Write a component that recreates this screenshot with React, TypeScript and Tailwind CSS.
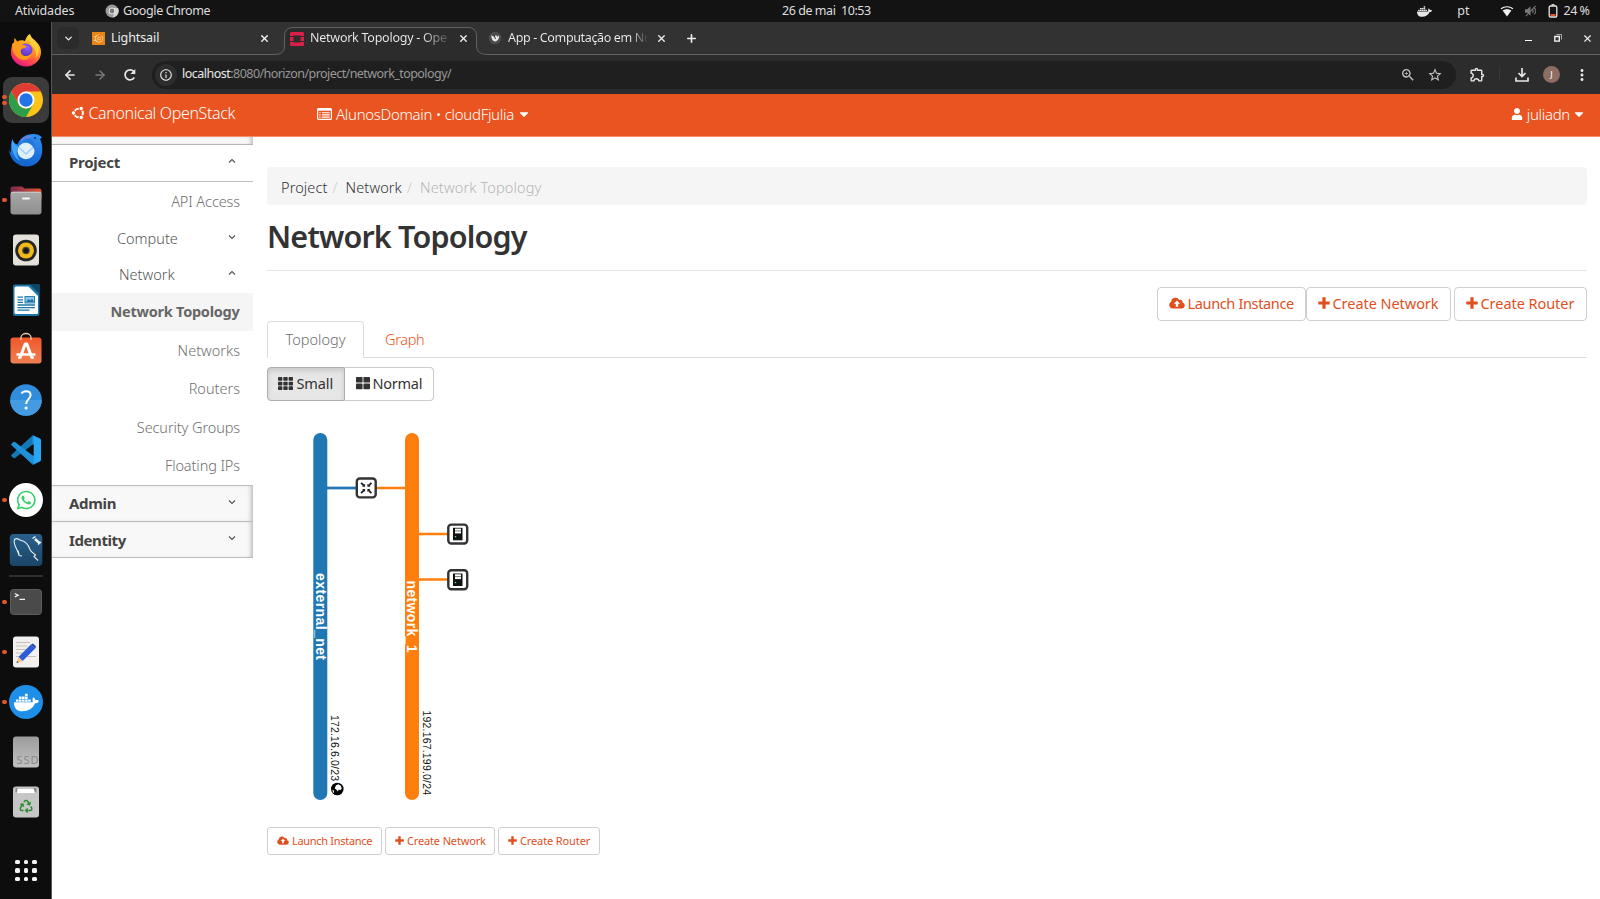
import type { ReactNode } from "react";
import { FaCaretDown, FaDocker, FaRecycle, FaTh, FaThLarge, FaUser, FaWhatsapp } from "react-icons/fa";
import { MdMoreVert, MdOutlineExtension, MdOutlineInfo, MdStarBorder, MdZoomIn } from "react-icons/md";
import { ArrowLeft, ArrowRight, ChevronDown, Plus, X } from "lucide-react";

/* ---------- Dock icons, each drawn on a 36×36 grid ---------- */

const Firefox = () => (
  <>
    <defs>
      <linearGradient id="ff" x1="0.8" y1="0" x2="0.3" y2="1">
        <stop offset="0" stopColor="#fff04f" />
        <stop offset="0.4" stopColor="#ffa01f" />
        <stop offset="0.75" stopColor="#ff4650" />
        <stop offset="1" stopColor="#e5178a" />
      </linearGradient>
      <radialGradient id="fg" cx="0.6" cy="0.3" r="0.8">
        <stop offset="0" stopColor="#9a5cff" />
        <stop offset="1" stopColor="#4a2fb0" />
      </radialGradient>
    </defs>
    <path fill="url(#ff)" d="M22 2c1 4 4 5 6.500 8 3 3 4.500 6 4.500 10a15 14.500 0 0 1-30 0c0-4 1-7 3-10l.5-4c1 1 2 2 2.500 3.500C12 8 15 8 17 9c1-3 2.500-6 5-7z" />
    <circle cx="18" cy="18" r="6.500" fill="url(#fg)" />
    <path fill="#ff9a1c" d="M4 12c4-2 8-2 10 1 2 0 4 .5 4.500 1.500-1 2-4 1.500-5.500 3-1 3 1 6 4 6.500 3 .3 6-1 7-3.500-.5 4.500-4 7.500-8 7.500C8 27.500 4 20 4 12z" />
    <path fill="#ffd53a" opacity=".8" d="M22 3c.5 4 7 7 8.500 13 .8 4-.5 8-3 10 2-6-1-10-4-13-2-3-3-6-1.500-10z" />
  </>
);

const Chrome = () => (
  <>
    <circle cx="18" cy="18" r="17" fill="#fcc419" />
    <path fill="#e03c31" d="M3.300 9.500A17 17 0 0 1 32.700 9.500H18a8.500 8.500 0 0 0-7.400 4.300z" />
    <path fill="#e03c31" d="M3.300 9.500 10.600 22.200 18 9.500z" />
    <path fill="#2e9e4b" d="M3.300 9.500A17 17 0 0 0 18 35l7.400-12.800a8.500 8.500 0 0 1-14.800 0z" />
    <circle cx="18" cy="18" r="8.500" fill="#fff" />
    <circle cx="18" cy="18" r="6.700" fill="#2373e8" />
  </>
);

const Thunderbird = () => (
  <>
    <defs>
      <linearGradient id="tb" x1="0.6" y1="0" x2="0.3" y2="1">
        <stop offset="0" stopColor="#2f8df0" />
        <stop offset="1" stopColor="#1060c8" />
      </linearGradient>
    </defs>
    <path fill="url(#tb)" d="M4.500 7c.5 3 2 5 5 5.500C12 6 18 2 25 2c4 0 7 1 9 3.500l-2 1.500c2.500 5 2.500 10 2 14-1 8-7 13.500-15 13.500C9 34.500 1 27 1 16c0 2 1 3.500 2 4.500C2.500 15 3 10 4.500 7z" />
    <path fill="#3fa6f7" d="M4.500 7c.5 4 4 7 6 8-3 4-2 10 2 14C7 27 2 19 4.500 7z" />
    <ellipse cx="18" cy="19" rx="8.500" ry="8.200" fill="#dff0fd" />
    <path d="M11 15.500l7 6.500 7-6.500" stroke="#a9cbee" strokeWidth="1.500" fill="none" />
    <path fill="#2378dc" d="M15 9c4-3 8-3 11 1 1.500 2 1.500 5 0 7-1-4-6-7-11-8z" />
    <path d="M13 8.500c3-3 7-4 10-3.500" stroke="#8d7be0" strokeWidth="1.200" fill="none" />
    <circle cx="27" cy="6" r="1.100" fill="#0d3a80" />
  </>
);

const Files = () => (
  <>
    <defs>
      <linearGradient id="fo" x1="0" y1="0" x2="1" y2="0">
        <stop offset="0" stopColor="#7b2a52" />
        <stop offset="1" stopColor="#e8552b" />
      </linearGradient>
      <linearGradient id="fb" x1="0" y1="0" x2="0" y2="1">
        <stop offset="0" stopColor="#a8a8a8" />
        <stop offset="1" stopColor="#8f8f8f" />
      </linearGradient>
    </defs>
    <path fill="url(#fo)" d="M2.500 6.500a2 2 0 0 1 2-2H14l2.500 2H31a2.500 2.500 0 0 1 2.500 2.500v8h-31z" />
    <rect x="2.500" y="9.500" width="31" height="23" rx="3" fill="url(#fb)" />
    <path d="M3 10.500h30" stroke="#c4c4c4" />
    <rect x="14" y="15.500" width="8" height="2" rx="1" fill="#f5f5f5" />
  </>
);

const Rhythmbox = () => (
  <>
    <rect x="5" y="2.500" width="26" height="31" rx="3" fill="#e4e0da" />
    <circle cx="18" cy="18.500" r="10.800" fill="#262626" />
    <circle cx="18" cy="18.500" r="8" fill="#f1b917" />
    <circle cx="18" cy="18.500" r="3.800" fill="#4a4a42" />
    <circle cx="18" cy="18.500" r="2.600" fill="#151515" />
  </>
);

const Writer = () => (
  <>
    <path fill="#1c75a8" d="M7 2.500h24.500v29a2.500 2.500 0 0 1-2.500 2.500H7a2 2 0 0 1-2-2V4.500a2 2 0 0 1 2-2z" />
    <path fill="#fff" d="M8 4.500h12.500L30 14v16.500a1.500 1.500 0 0 1-1.500 1.500H8A1.500 1.500 0 0 1 6.500 30.500V6A1.500 1.500 0 0 1 8 4.500z" />
    <path fill="#0b4767" d="M22 2.500h9.500V12z" />
    <path d="M9.500 15.200h5.500M9.500 17.800h5.500M9.500 20.400h5.500M9.500 23h17.500M9.500 25.600h17.500M9.500 28.200h12" stroke="#1c75a8" strokeWidth="1.300" />
    <rect x="17" y="14.500" width="9.500" height="6.500" fill="#8fc7e8" stroke="#1c75a8" strokeWidth=".9" />
    <path fill="#1c75a8" d="M18 20l2.500-3 2 1.500 1.500-2L26 20z" />
  </>
);

const Software = () => (
  <>
    <defs>
      <linearGradient id="sw" x1="0" y1="0" x2="0" y2="1">
        <stop offset="0" stopColor="#f0582a" />
        <stop offset="1" stopColor="#f08052" />
      </linearGradient>
    </defs>
    <rect x="2.500" y="5.500" width="31" height="26" rx="3" fill="url(#sw)" />
    <path d="M13 8V5.500a5 4 0 0 1 10 0V8" stroke="#e9c9ae" strokeWidth="1.300" fill="none" />
    <path d="M12 26 17.200 12h1.600L24 26" stroke="#fff" strokeWidth="3" fill="none" strokeLinejoin="round" />
    <path d="M8.500 22.500h19" stroke="#fff" strokeWidth="2.500" />
    <circle cx="11.500" cy="25.500" r="1.500" fill="#fff" />
    <circle cx="24.500" cy="25.500" r="1.500" fill="#fff" />
  </>
);

const Help = () => (
  <>
    <circle cx="18" cy="18" r="15.800" fill="#2f8ddc" />
    <path d="M2.200 18a15.800 15.800 0 0 0 31.600 0z" fill="#459be2" />
    <path d="M13.500 11.500c1-1.700 2.500-2.300 4.500-2.300 2.700 0 4.600 1.500 4.600 3.900 0 3.900-4.500 4.300-4.500 9" stroke="#fff" strokeWidth="2" fill="none" />
    <circle cx="18.100" cy="26" r="1.600" fill="#fff" />
  </>
);

const VsCode = () => (
  <>
    <path fill="#1378b8" d="M24.500 3.500 3.500 22.800a1 1 0 0 0 0 1.400l2 1.800a1.200 1.200 0 0 0 1.500 0L26 11.500z" />
    <path fill="#1f8fd6" d="M24.500 32.500 3.500 13.300a1 1 0 0 1 0-1.500L5.500 10A1.200 1.200 0 0 1 7 10l19 14.500z" />
    <path fill="#2ba6f2" d="M24.500 3.500 26 3.700 32 6.600a1.800 1.800 0 0 1 1 1.600v19.600a1.800 1.800 0 0 1-1 1.600l-6 2.900-1.500.2a1.500 1.500 0 0 0 1.200-1.500V5a1.500 1.500 0 0 0-1.200-1.500z" />
    <path fill="#2196e4" d="M24.500 3.500h1.500V12l-1.500 1zM24.500 32.500H26V24l-1.500-1z" />
  </>
);

const WhatsApp = () => (
  <>
    <circle cx="18" cy="18" r="17" fill="#fff" />
    <FaWhatsapp x="7.500" y="7.300" size={21.500} color="#36cf68" />
  </>
);

const Workbench = () => (
  <>
    <defs>
      <linearGradient id="wb" x1="0" y1="0" x2="0" y2="1">
        <stop offset="0" stopColor="#29618c" />
        <stop offset="1" stopColor="#1b4568" />
      </linearGradient>
    </defs>
    <rect x="1.800" y="2" width="32.500" height="32" rx="4" fill="url(#wb)" />
    <path d="M11 23.500c-.5-2-1-3.500-2-5.500-2-4-3.500-8-2.500-10.500 1.500-1.500 4-.8 6 .7 4.500.8 8 4.800 9.500 9.300 1 2.500 4 4 5.500 5.500l-1.500 1.500 4 4M11 23.500l3 .5M9 18c1.500 1 2 3 2 5.500" stroke="#e4edf4" strokeWidth="1.100" fill="none" />
    <path d="M27 7l4.500 4" stroke="#f2f6f9" strokeWidth="2.400" />
    <path d="M24.500 6.500l3-2M30 12.500l3-2.500" stroke="#f2f6f9" strokeWidth="1.500" />
  </>
);

const Terminal = () => (
  <>
    <rect x="2.500" y="5.500" width="31" height="25" rx="3" fill="#4a4a4a" stroke="#5d5d5d" />
    <path d="M6.800 9.500l3.400 1.700-3.400 1.700M11.500 15.300h5.500" stroke="#f2f2f2" strokeWidth="1.200" fill="none" />
  </>
);

const Editor = () => (
  <>
    <rect x="5" y="2.500" width="26" height="31" rx="3" fill="#f1f0ee" />
    <path d="M8 8.500h14M8 12h11M8 15.500h12M8 19h8M8 22.500h20" stroke="#c8c2b4" strokeWidth="1.100" />
    <path d="M12.500 25 25 12.500" stroke="#2e5bd8" strokeWidth="6" />
    <path d="M23 10.500l2-1 3 3-.8 2z" fill="#1f43a8" />
    <path fill="#f6c08c" d="M10.300 22.700l4.500 4.500L8.500 29z" />
    <path fill="#444" d="M8.500 29l.6-2 1.500 1.400z" />
  </>
);

const Docker = () => (
  <>
    <circle cx="18" cy="18" r="17" fill="#1d8fe8" />
    <FaDocker x="6" y="6" size={25} color="#fff" />
  </>
);

const Ssd = () => (
  <>
    <defs>
      <linearGradient id="sd" x1="0" y1="0" x2="0" y2="1">
        <stop offset="0" stopColor="#9c9c9c" />
        <stop offset="1" stopColor="#c2c2c2" />
      </linearGradient>
    </defs>
    <rect x="5" y="2.500" width="26" height="31" rx="3" fill="url(#sd)" />
    <text x="8.500" y="29.500" fontSize="11" fill="#8a8a8a" fontFamily="Noto Sans" textLength="22">SSD</text>
  </>
);

const Trash = () => (
  <>
    <rect x="5" y="2.500" width="26" height="31" rx="3" fill="#c6c6c6" />
    <path fill="#8c8c8c" d="M7.500 4h21v4.500h-21z" />
    <path fill="#fff" d="M9.500 4.500h16l1.500 4.500H9z" />
    <FaRecycle x="11.300" y="15.500" size={13.500} color="#2f8f35" />
  </>
);

type DockItem = { icon: () => ReactNode; running?: number; active?: boolean };

const pinned: DockItem[] = [
  { icon: Firefox },
  { icon: Chrome, running: 2, active: true },
  { icon: Thunderbird },
  { icon: Files, running: 1 },
  { icon: Rhythmbox },
  { icon: Writer },
  { icon: Software },
  { icon: Help },
  { icon: VsCode },
  { icon: WhatsApp, running: 1 },
  { icon: Workbench },
];
const others: DockItem[] = [
  { icon: Terminal, running: 1 },
  { icon: Editor, running: 1 },
  { icon: Docker, running: 1 },
  { icon: Ssd },
  { icon: Trash },
];

function DockButton({ icon: Icon, running = 0, active }: DockItem) {
  return (
    <div className="flex h-[50px] w-full shrink-0 items-center">
      <div className={`ml-[3px] flex h-[46px] w-[46px] items-center rounded-[9px] ${active ? "bg-[#3b3b3b]" : ""}`}>
        <div className="flex w-[5px] flex-col items-center gap-[2px]">
          {Array.from({ length: running }, (_, i) => (
            <i key={i} className="-ml-[2px] h-[4.400px] w-[4.400px] rounded-full bg-[#e2572b]" />
          ))}
        </div>
        <svg viewBox="0 0 36 36" className="h-9 w-9">
          <Icon />
        </svg>
      </div>
    </div>
  );
}

function Dock() {
  return (
    <nav className="flex w-[52px] shrink-0 flex-col border-r border-[#555] bg-[#0d0d0d] pt-[3px]">
      {pinned.map((d, i) => (
        <DockButton key={i} {...d} />
      ))}
      <div className="ml-[9px] h-[2px] w-[34px] shrink-0 bg-[#2e2e2e]" />
      {others.map((d, i) => (
        <DockButton key={i} {...d} />
      ))}
      <div className="mt-[32.500px] ml-[15px] grid w-[22px] grid-cols-3 gap-[4px]">
        {Array.from({ length: 9 }, (_, i) => (
          <i key={i} className="h-[4.600px] w-[4.600px] rounded-[1.500px] bg-[#f4f4f4]" />
        ))}
      </div>
    </nav>
  );
}

/* ---------- Desktop top bar ---------- */

function TopBar() {
  return (
    <header className="flex h-[22px] shrink-0 items-center bg-[#131313] text-[12.500px] leading-none whitespace-pre text-[#dedede]">
      <div className="flex w-[782px] items-center pl-[15px]">
        <span className="w-[90px] tracking-[-0.15px]">Atividades</span>
        <svg viewBox="0 0 14 14" className="mr-[4px] h-[14px] w-[14px]">
          <circle cx="7" cy="7" r="6.500" fill="#9b9b9b" />
          <path fill="#d4d4d4" d="M7 4h6a6.500 6.500 0 0 1-5.500 9.500L9.800 8.500z" />
          <circle cx="7" cy="7" r="3.300" fill="#eee" />
          <circle cx="7" cy="7" r="2.400" fill="#777" />
        </svg>
        <span className="tracking-[-0.4px]">Google Chrome</span>
      </div>
      <span className="tracking-[-0.45px]">26 de mai  10:53</span>
      <div className="flex flex-1 items-center justify-end pr-[10.500px]">
        <FaDocker className="mr-[25px] h-[15px] w-[15px] text-[#e6e6e6]" />
        <span className="mr-[30px]">pt</span>
        <svg viewBox="0 0 14 12" className="mr-[10px] h-[12px] w-[14px]">
          <path fill="#f2f2f2" d="M7 11.500 2.600 5.500a7.500 7.500 0 0 1 8.800 0z" />
          <path d="M1 3.800a10 10 0 0 1 12 0" stroke="#f2f2f2" strokeWidth="1.300" fill="none" />
        </svg>
        <svg viewBox="0 0 14 12" className="mr-[11px] h-[12px] w-[13px]">
          <path fill="#777" d="M1 4h2.500L7 1v10L3.500 8H1z" />
          <path d="M9 4c1 1.200 1 3 0 4M11 2.500c2 2 2 5 0 7M2 11.500 12.500.5" stroke="#777" strokeWidth="1.200" fill="none" />
        </svg>
        <svg viewBox="0 0 10 14" className="mr-[6px] h-[14px] w-[10px]">
          <rect x="1.200" y="2" width="7.600" height="11" rx="1.200" fill="none" stroke="#e8e8e8" strokeWidth="1.300" />
          <path d="M3.500.8h3" stroke="#e8e8e8" strokeWidth="1.400" />
          <path d="M2.500 11h5" stroke="#e2572b" strokeWidth="2" />
        </svg>
        <span className="tracking-[-0.5px]">24 %</span>
      </div>
    </header>
  );
}

/* ---------- Browser chrome ---------- */

function TabStrip() {
  return (
    <div className="flex h-[33px] shrink-0 bg-[#323232] text-[12.500px] leading-none whitespace-nowrap text-[#ededed]">
      <div className="flex w-[223px] items-center border-b border-[#616161] pl-[5px]">
        <div className="flex h-[22px] w-[22px] items-center justify-center rounded-[7px] bg-[#2b2b2b]">
          <ChevronDown size={11} strokeWidth={3} />
        </div>
        <svg viewBox="0 0 13 13" className="ml-[13px] h-[13px] w-[13px]">
          <rect width="13" height="13" fill="#ea8414" />
          <circle cx="7" cy="6.500" r="3.800" fill="none" stroke="#fbdcb2" strokeWidth=".8" strokeDasharray="17 3" />
          <circle cx="7" cy="6.500" r="1.500" fill="none" stroke="#fbdcb2" strokeWidth=".8" />
          <path d="M1.500 4.500h3M1.500 8.500h3" stroke="#fbdcb2" strokeWidth=".7" />
        </svg>
        <span className="ml-[6px] w-[148px] tracking-[-0.1px]">Lightsail</span>
        <X size={11} strokeWidth={3} />
      </div>
      <div className="relative flex w-[212px] items-center pl-[15px]">
        <svg viewBox="0 0 212 33" className="absolute inset-0 h-[33px] w-[212px]">
          <path
            d="M0 32.500Q9.500 32.500 9.500 24V14Q9.500 5.500 18 5.500H193Q201.500 5.500 201.500 14V24Q201.500 32.500 212 32.500V34H0z"
            fill="#2c2c2c"
            stroke="#616161"
          />
        </svg>
        <svg viewBox="0 0 14 14" className="relative h-[14px] w-[14px]">
          <path fill="#dc1f49" fillRule="evenodd" d="M1.500 0h11A1.500 1.500 0 0 1 14 1.500V4h-3.500V3.500h-7V4H0V1.500A1.500 1.500 0 0 1 1.500 0zM0 5h3.500v4H0zM10.500 5H14v4h-3.500zM0 10h3.500v.5h7V10H14v2.500a1.500 1.500 0 0 1-1.500 1.500h-11A1.500 1.500 0 0 1 0 12.500z" />
        </svg>
        <span className="relative ml-[6px] w-[140px] bg-linear-to-r from-[#ededed] from-80% to-[#444] bg-clip-text py-1 tracking-[-0.25px] text-transparent">
          Network Topology - Ope
        </span>
        <X size={11} strokeWidth={3} className="relative ml-[8px]" />
      </div>
      <div className="flex flex-1 items-center border-b border-[#616161] pr-[7px] pl-px">
        <svg viewBox="0 0 14 14" className="h-[14px] w-[14px]">
          <circle cx="7" cy="7" r="6.300" fill="#4c4c4c" />
          <path fill="#e8e8e8" d="M3.500 4c1 1.500 2 1.500 3 1.500L8 4l1 1.500c1 0 1.500-.5 2-1.500.5 3-1 6-4 6.500C4.500 10 3 7 3.500 4z" />
          <path d="M6 4l1.500 4" stroke="#333" />
        </svg>
        <span className="ml-[6px] bg-linear-to-r from-[#ededed] from-86% to-[#323232] to-98% bg-clip-text py-1 tracking-[-0.35px] text-transparent">
          App - Computação em Nu
        </span>
        <X size={11} strokeWidth={3} className="ml-[5px]" />
        <Plus size={13} strokeWidth={3} className="ml-[18px]" />
        <div className="ml-auto flex items-center">
          <i className="mt-[4px] h-px w-[7px] bg-white" />
          <svg viewBox="0 0 8 8" className="ml-[22px] h-[8px] w-[8px]">
            <path d="M.8 2.500h4.500v4.700H.8z" fill="none" stroke="#fff" strokeWidth="1.300" />
            <path d="M2.500.5h5v5" fill="none" stroke="#aaa" />
          </svg>
          <X size={11} strokeWidth={2.500} className="ml-[20px]" />
        </div>
      </div>
    </div>
  );
}

function Toolbar() {
  return (
    <div className="flex h-[39px] shrink-0 items-center bg-[#2c2c2c] pr-[11px] pl-[11px] text-[#e6e6e6]">
      <ArrowLeft size={14} strokeWidth={2.800} />
      <ArrowRight size={14} strokeWidth={2.500} className="ml-[16px] text-[#777]" />
      <svg viewBox="0 0 14 14" className="ml-[16px] h-[14px] w-[14px]">
        <path d="M11.300 9.500a5 5 0 1 1-.5-6" fill="none" stroke="#e6e6e6" strokeWidth="1.700" />
        <path fill="#e6e6e6" d="M12.300 1v5H7.300z" />
      </svg>
      <div className="ml-[15px] flex h-[28px] flex-1 items-center rounded-full bg-[#1f1f1f] pr-[13px] pl-[3px]">
        <div className="flex h-[22px] w-[22px] items-center justify-center rounded-full bg-[#2d2d2d]">
          <MdOutlineInfo size={14} />
        </div>
        <p className="ml-[5px] flex-1 text-[12.500px] leading-none whitespace-nowrap text-[#989898]">
          <span className="tracking-[-0.5px] text-[#e8e8e8]">localhost</span>
          <span className="tracking-[-0.56px]">:8080/horizon/project/network_topology/</span>
        </p>
        <MdZoomIn size={16} className="text-[#c4c4c4]" />
        <MdStarBorder size={16} className="ml-[11px] text-[#c4c4c4]" />
      </div>
      <MdOutlineExtension size={17} className="ml-[13px]" />
      <i className="ml-[13px] h-[13px] w-px bg-[#383838]" />
      <svg viewBox="0 0 14 14" className="ml-[15px] h-[14px] w-[14px]">
        <path d="M7 0v8M3.500 5 7 8.500 10.500 5M1 9.500V13h12V9.500" fill="none" stroke="#e6e6e6" strokeWidth="1.700" />
      </svg>
      <div className="ml-[14px] flex h-[17px] w-[17px] items-center justify-center rounded-full bg-[#8d6e63] text-[9px] leading-none text-white">
        J
      </div>
      <MdMoreVert size={18} className="ml-[13px] -mr-[2px]" />
    </div>
  );
}

/* ---------- Horizon dashboard ---------- */

function UbuntuMark() {
  return (
    <svg viewBox="0 0 14 14" className="h-[14px] w-[14px] shrink-0">
      <circle cx="7.600" cy="7" r="4.300" fill="none" stroke="#fff" strokeWidth="2" />
      <g fill="#fff" stroke="#e95420" strokeWidth="1">
        <circle cx="2.400" cy="7" r="2.200" />
        <circle cx="10.200" cy="2.500" r="2.200" />
        <circle cx="10.200" cy="11.500" r="2.200" />
      </g>
    </svg>
  );
}

function ListIcon() {
  return (
    <svg viewBox="0 0 15 12" className="h-[12px] w-[15px]">
      <rect x=".6" y=".6" width="13.800" height="10.800" rx="1" fill="none" stroke="#fff" strokeWidth="1.200" />
      <path d="M.6 1.700h13.800" stroke="#fff" strokeWidth="2" />
      <path d="M2.300 4.700h1.300M2.300 6.900h1.300M2.300 9.100h1.300M4.800 4.700h7.900M4.800 6.900h7.900M4.800 9.100h7.900" stroke="#fff" strokeWidth="1.100" />
    </svg>
  );
}

function Masthead() {
  return (
    <div className="flex h-[43px] shrink-0 items-center border-b border-[#f0906f] bg-[#e95420] pb-[2px] leading-none font-light whitespace-nowrap text-white">
      <div className="flex w-[265px] items-center pb-[2px] pl-[19px]">
        <UbuntuMark />
        <span className="ml-[3.500px] text-[16px] tracking-[-0.36px]">Canonical OpenStack</span>
      </div>
      <ListIcon />
      <span className="ml-[4px] text-[15px] tracking-[-0.3px]">AlunosDomain • cloudFjulia</span>
      <FaCaretDown size={14} className="ml-[3px]" />
      <div className="ml-auto flex items-center pr-[14px]">
        <FaUser size={12} />
        <span className="ml-[4px] text-[15px] tracking-[-0.3px]">juliadn</span>
        <FaCaretDown size={14} className="ml-[2px]" />
      </div>
    </div>
  );
}

function Chevron({ up }: { up?: boolean }) {
  return (
    <svg viewBox="0 0 8 6" className={`mb-[4px] h-[6px] w-[8px] ${up ? "" : "rotate-180"}`}>
      <path d="M1 4.500 4 1.500l3 3" fill="none" stroke="#555" strokeWidth="1.200" />
    </svg>
  );
}

const leaf = "flex h-[38.500px] shrink-0 items-center justify-end pr-[13px] pb-[1px] text-[14.500px] text-[#6f6f6f]";
const branch = "flex shrink-0 items-center pr-[17px] text-[14.500px] text-[#555]";
const panel = "flex shrink-0 items-center justify-between border-b border-[#bdbdbd] pr-[17px] pl-[17px] text-[15px] font-bold text-[#444]";

function Sidebar() {
  return (
    <aside className="flex w-[201px] shrink-0 flex-col leading-none font-light whitespace-nowrap">
      <div className="h-[8px] shrink-0 border-b border-[#b5b5b5] bg-[#f8f8f8] shadow-[inset_-4px_0_4px_-2px_#bbb]" />
      <div className={`${panel} h-[37px]`}>
        <span className="pb-[2px] tracking-[-0.25px]">Project</span>
        <Chevron up />
      </div>
      <div className={leaf}>
        <span className="tracking-[-0.1px]">API Access</span>
      </div>
      <div className={`${branch} h-[36.500px]`}>
        <span className="ml-[65px] flex-1 pb-[2px]">Compute</span>
        <Chevron />
      </div>
      <div className={`${branch} h-[35.500px]`}>
        <span className="ml-[67px] flex-1 pb-[2px]">Network</span>
        <Chevron up />
      </div>
      <div className="flex h-[38.500px] shrink-0 items-center justify-end bg-[#f5f5f5] pr-[13.500px] pb-[2px] text-[14.500px] font-bold tracking-[-0.25px] text-[#666]">
        Network Topology
      </div>
      <div className={leaf}>Networks</div>
      <div className={leaf}>Routers</div>
      <div className={leaf}>
        <span className="tracking-[-0.1px]">Security Groups</span>
      </div>
      <div className={leaf}>
        <span className="tracking-[-0.1px]">Floating IPs</span>
      </div>
      <div className={`${panel} h-[37px] border-t bg-[#f8f8f8] shadow-[inset_-4px_0_4px_-2px_#bbb]`}>
        <span className="tracking-[-0.3px]">Admin</span>
        <Chevron />
      </div>
      <div className={`${panel} h-[36px] bg-[#f8f8f8] shadow-[inset_-4px_0_4px_-2px_#bbb]`}>
        <span className="pt-[1px] tracking-[-0.4px]">Identity</span>
        <Chevron />
      </div>
    </aside>
  );
}

function CloudUpload({ className }: { className: string }) {
  return (
    <svg viewBox="0 0 16 12" className={className}>
      <path
        fill="currentColor"
        fillRule="evenodd"
        d="M3.700 11.500A3.600 3.600 0 0 1 2.200 4.700 4.300 4.300 0 0 1 10.300 3a2.300 2.300 0 0 1 3.200 2.600 3 3 0 0 1-.6 5.900zM8 3.500 4.800 6.800h2v3h2.400v-3h2z"
      />
    </svg>
  );
}

function PlusMark({ className }: { className: string }) {
  return (
    <svg viewBox="0 0 12 12" className={className}>
      <path d="M6 .3v11.400M.3 6h11.400" stroke="currentColor" strokeWidth="3.200" />
    </svg>
  );
}

const big = "flex h-[34px] items-center rounded-[4px] border border-[#cfcfcf] bg-white pb-[2px] pl-[10.500px] text-[14.500px] text-[#e04f1d]";
const small = "flex h-[28px] items-center rounded-[3px] border border-[#cfcfcf] bg-white pb-[2px] pl-[9px] text-[11px] text-[#e04f1d]";

const serverIcon = (x: number, y: number) => (
  <g transform={`translate(${x} ${y})`}>
    <rect x="1.300" y="1.300" width="18.900" height="18.900" rx="3" fill="#fff" stroke="#333" strokeWidth="2.400" />
    <rect x="6" y="4.500" width="9.500" height="12.500" fill="#111" />
    <path d="M8 5.300h6v4.800H8z" fill="#fff" />
    <path d="M8 7.600h6" stroke="#555" strokeWidth=".8" />
    <circle cx="8.500" cy="13.500" r=".8" fill="#7d7" />
  </g>
);

function TopologyMap() {
  return (
    <svg viewBox="0 0 300 400" className="mt-[19px] h-[400px] w-[300px] shrink-0 overflow-visible font-['Liberation_Sans']">
      <g strokeWidth="2.700">
        <path d="M58 68h32" stroke="#1f77b4" />
        <path d="M108 68h32M150 114h32M150 159.500h32" stroke="#ff7f0e" />
      </g>
      <rect x="46.300" y="13" width="14" height="367" rx="7" fill="#1f77b4" />
      <rect x="138" y="13" width="14" height="367" rx="7" fill="#ff7f0e" />
      <g fill="#fff" fontSize="14" fontWeight="700">
        <text transform="translate(48.600 153) rotate(90)" textLength="87">external_net</text>
        <text transform="translate(140.100 160.500) rotate(90)" textLength="72">network_1</text>
      </g>
      <g fill="#111" fontSize="10.500">
        <text transform="translate(64.200 295) rotate(90)" textLength="66">172.16.6.0/23</text>
        <text transform="translate(155.900 290.500) rotate(90)" textLength="84.500">192.167.199.0/24</text>
      </g>
      <g transform="translate(70.300 369)">
        <circle r="6.300" fill="#000" />
        <path fill="#fff" d="M-1.500-3.500 1-4.800 3.500-3.200 4.500-.5 3 1.200 1.500.5.500 2.500-1 .5-2.500-.5zM-5 .5l1.500 1 .3 2-1 .3z" />
      </g>
      <g transform="translate(88.500 57.200)">
        <rect x="1.300" y="1.300" width="18.900" height="18.900" rx="3" fill="#fff" stroke="#333" strokeWidth="2.400" />
        <path d="M5.600 5.600 8.600 8.600M15.900 5.600 12.900 8.600M5.600 15.900 8.600 12.900M15.900 15.900l-3-3" stroke="#222" strokeWidth="1.900" />
        <path fill="#222" d="M9.600 6.600v3H6.600zM11.900 6.600v3h3zM9.600 14.900v-3H6.600zM11.900 14.900v-3h3z" />
      </g>
      {serverIcon(180, 103.300)}
      {serverIcon(180, 149)}
    </svg>
  );
}

function Content() {
  return (
    <main className="flex min-w-0 flex-1 flex-col pt-[30px] pr-[13px] pl-[14px] leading-none whitespace-nowrap">
      <div className="flex h-[38px] shrink-0 items-center rounded-[4px] bg-[#f5f5f5] pt-[2px] pl-[14px] text-[14.500px] font-light tracking-[0.1px] text-[#333]">
        <span>Project</span>
        <span className="ml-[5px] text-[#ccc]">/</span>
        <span className="ml-[8px]">Network</span>
        <span className="ml-[5px] text-[#ccc]">/</span>
        <span className="ml-[8px] tracking-[0.13px] text-[#b5b5b5]">Network Topology</span>
      </div>
      <h1 className="flex h-[66px] shrink-0 items-center border-b border-[#e8e8e8] pb-[2px] text-[30.500px] font-semibold tracking-[-0.82px] text-[#333]">
        Network Topology
      </h1>
      <div className="mt-[16px] flex shrink-0 justify-end">
        <button className={`${big} w-[149px]`}>
          <CloudUpload className="mr-[3px] h-[12px] w-[16px]" />
          <span className="tracking-[-0.35px]">Launch Instance</span>
        </button>
        <button className={`${big} w-[145px]`}>
          <PlusMark className="mr-[3px] h-[12px] w-[12px]" />
          <span className="tracking-[-0.05px]">Create Network</span>
        </button>
        <button className={`${big} ml-[3px] w-[133px]`}>
          <PlusMark className="mr-[3px] h-[12px] w-[12px]" />
          <span className="tracking-[-0.05px]">Create Router</span>
        </button>
      </div>
      <div className="flex h-[37px] shrink-0 items-end border-b border-[#ddd] text-[14.500px] font-light">
        <div className="-mb-px flex h-[37px] w-[97px] items-center justify-center rounded-t-[4px] border border-b-0 border-[#ddd] bg-white pb-[2px] text-[#6f6f6f]">
          Topology
        </div>
        <div className="flex h-[36px] items-center pl-[21px] tracking-[-0.35px] text-[#e95420]">Graph</div>
      </div>
      <div className="mt-[9px] flex shrink-0 text-[14.500px] text-[#333]">
        <button className="flex h-[34px] w-[78px] items-center gap-[3.500px] rounded-l-[4px] border border-[#adadad] bg-[#e6e6e6] pb-[2px] pl-[10px] tracking-[-0.1px] shadow-[inset_0_3px_5px_rgba(0,0,0,0.125)]">
          <FaTh size={15} />
          Small
        </button>
        <button className="flex h-[34px] w-[89px] items-center gap-[3px] rounded-r-[4px] border border-l-0 border-[#ccc] bg-white pb-[2px] pl-[10.500px] tracking-[-0.25px]">
          <FaThLarge size={14} />
          Normal
        </button>
      </div>
      <TopologyMap />
      <div className="mt-[7px] flex shrink-0 gap-[3px]">
        <button className={`${small} w-[115px]`}>
          <CloudUpload className="mr-[3px] h-[9px] w-[12px]" />
          <span className="tracking-[-0.3px]">Launch Instance</span>
        </button>
        <button className={`${small} w-[110px]`}>
          <PlusMark className="mr-[3px] h-[9px] w-[9px]" />
          <span className="tracking-[-0.15px]">Create Network</span>
        </button>
        <button className={`${small} w-[102px]`}>
          <PlusMark className="mr-[3px] h-[9px] w-[9px]" />
          <span className="tracking-[-0.12px]">Create Router</span>
        </button>
      </div>
    </main>
  );
}

export default function App() {
  return (
    <div className="flex h-[899px] w-[1600px] flex-col overflow-hidden bg-white font-['Noto_Sans',sans-serif]">
      <TopBar />
      <div className="flex min-h-0 flex-1">
        <Dock />
        <div className="flex min-w-0 flex-1 flex-col">
          <TabStrip />
          <Toolbar />
          <Masthead />
          <div className="flex min-h-0 flex-1">
            <Sidebar />
            <Content />
          </div>
        </div>
      </div>
    </div>
  );
}
